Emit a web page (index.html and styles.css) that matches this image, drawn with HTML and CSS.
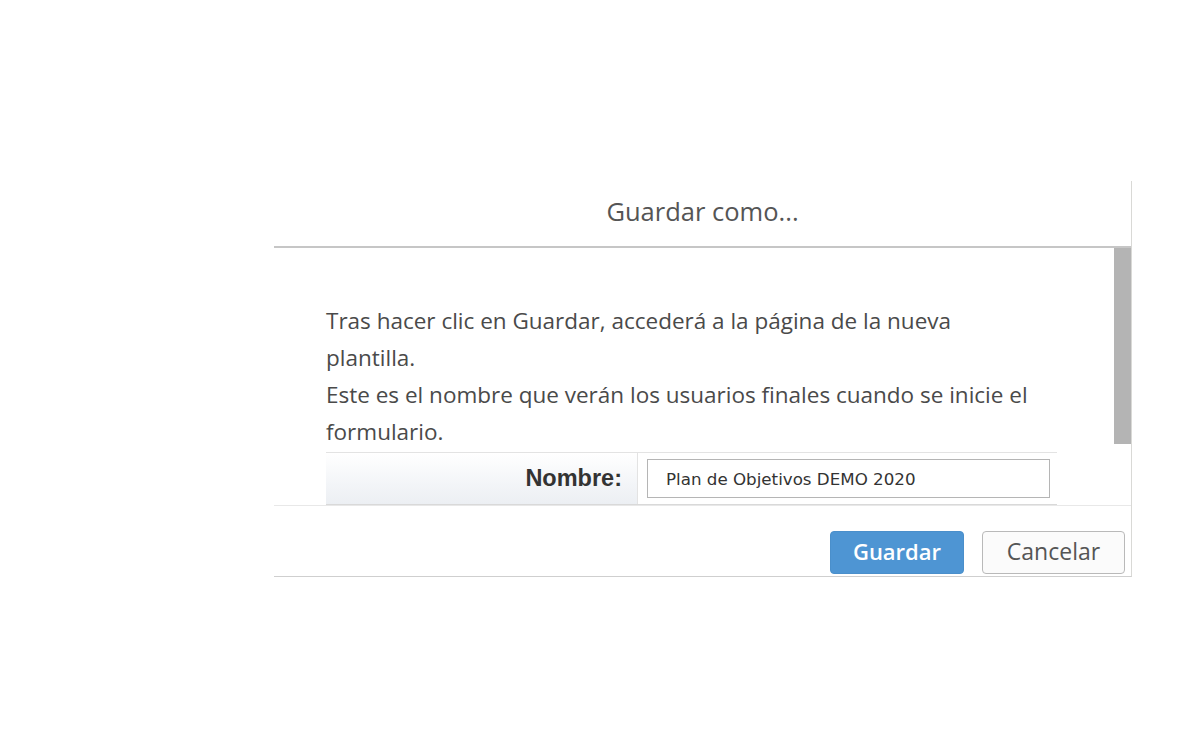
FILE: index.html
```html
<!DOCTYPE html>
<html lang="es">
<head>
<meta charset="utf-8">
<title>Guardar como...</title>
<link rel="stylesheet" href="styles.css">
</head>
<body>
<div class="page">
  <div class="dialog">
    <header class="dlg-header">
      <h1 class="dlg-title">Guardar como...</h1>
    </header>
    <div class="dlg-content">
      <div class="scroll-thumb"></div>
      <p class="msg">Tras hacer clic en Guardar, accederá a la página de la nueva plantilla.<br>Este es el nombre que verán los usuarios finales cuando se inicie el formulario.</p>
      <div class="form-row">
        <label class="form-label" for="nombre">Nombre:</label>
        <div class="form-field">
          <input id="nombre" class="text-input" type="text" value="Plan de Objetivos DEMO 2020">
        </div>
      </div>
    </div>
    <footer class="dlg-footer">
      <button class="btn btn-primary" type="button">Guardar</button>
      <button class="btn btn-secondary" type="button">Cancelar</button>
    </footer>
  </div>
</div>
</body>
</html>
```

FILE: styles.css
```css
html, body {
  margin: 0;
  padding: 0;
  background: #ffffff;
}

.page {
  padding: 181px 0 0 274px;
}

.dialog {
  width: 857px;
  border-right: 1px solid #d9d9d6;
  border-bottom: 1px solid #cfcfcf;
  background: #ffffff;
  font-family: "Open Sans", "Liberation Sans", sans-serif;
}

.dlg-header {
  height: 65px;
  border-bottom: 2px solid #c6c6c6;
  display: flex;
  align-items: center;
  justify-content: center;
}

.dlg-title {
  margin: 0 0 5px 0;
  font-weight: 400;
  font-size: 25.5px;
  color: #555555;
}

.dlg-content {
  position: relative;
  height: 257px;
  padding: 0 0 0 52px;
  box-sizing: border-box;
  display: flex;
  flex-direction: column;
  justify-content: flex-end;
}

.scroll-thumb {
  position: absolute;
  right: 0;
  top: 0;
  width: 17px;
  height: 196px;
  background: #b4b4b4;
}

.msg {
  margin: 0 0 2px 0;
  width: 720px;
  font-size: 22.5px;
  line-height: 37px;
  color: #4a4a4a;
}

.form-row {
  width: 731px;
  display: flex;
  border-top: 1px solid #e3e3e3;
  border-bottom: 1px solid #d9d9d9;
  height: 51px;
  box-sizing: content-box;
}

.form-label {
  width: 312px;
  box-sizing: border-box;
  border-right: 1px solid #e3e3e3;
  background: linear-gradient(to bottom, #ffffff 0%, #f3f5f8 60%, #eceff3 100%);
  display: flex;
  align-items: center;
  justify-content: flex-end;
  padding-right: 15px;
  font-family: "Liberation Sans", Arial, sans-serif;
  font-weight: 700;
  font-size: 23.5px;
  color: #333333;
}

.form-field {
  flex: 1;
  display: flex;
  align-items: center;
  padding: 0 7px 0 9px;
}

.text-input {
  width: 100%;
  height: 39px;
  box-sizing: border-box;
  border: 1px solid #b5b5b5;
  padding: 0 0 0 18px;
  font-family: "DejaVu Sans", Verdana, sans-serif;
  font-size: 16.7px;
  color: #333333;
  background: #ffffff;
  outline: none;
}

.dlg-footer {
  height: 71px;
  box-sizing: border-box;
  border-top: 1px solid #e8e8e8;
  display: flex;
  justify-content: flex-end;
  align-items: flex-start;
  gap: 18px;
  padding: 25px 6px 0 0;
}

.btn {
  height: 43px;
  border-radius: 4px;
  font-family: "Open Sans", "Liberation Sans", sans-serif;
  font-size: 23px;
  cursor: pointer;
  padding: 0 0 3px 0;
}

.btn-primary {
  width: 134px;
  background: #4e95d3;
  border: 1px solid #4a8fcb;
  color: #ffffff;
  font-size: 22px;
  font-weight: 600;
}

.btn-secondary {
  width: 143px;
  background: #fbfbfb;
  border: 1px solid #b9b9b9;
  color: #555555;
}
```
